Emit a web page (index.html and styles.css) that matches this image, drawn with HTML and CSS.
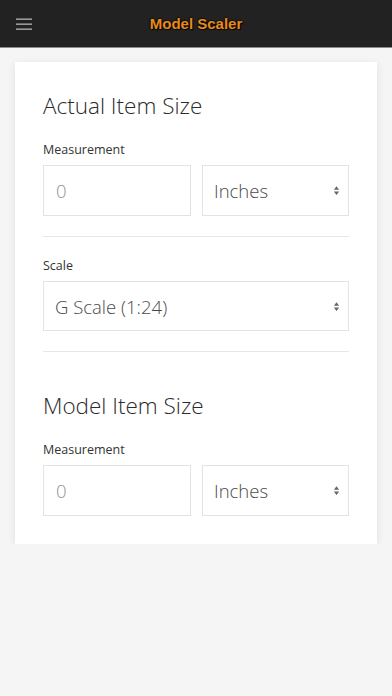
FILE: index.html
```html
<!DOCTYPE html>
<html>
<head>
<meta charset="utf-8">
<link rel="stylesheet" href="styles.css">
</head>
<body>
<header class="topbar">
  <svg class="menu" width="16" height="12" viewBox="0 0 16 12">
    <rect x="0" y="0.5" width="16" height="1.3" fill="#b5b5b5"/>
    <rect x="0" y="5.5" width="16" height="1.3" fill="#b5b5b5"/>
    <rect x="0" y="10.5" width="16" height="1.3" fill="#b5b5b5"/>
  </svg>
  <h1 class="title">Model Scaler</h1>
</header>
<main class="card">
  <h2 class="heading">Actual Item Size</h2>
  <label class="label">Measurement</label>
  <div class="row">
    <input class="field" type="text" placeholder="0">
    <select class="field select"><option>Inches</option></select>
  </div>
  <hr class="divider">
  <label class="label">Scale</label>
  <select class="field select full"><option>G Scale (1:24)</option></select>
  <hr class="divider">
  <h2 class="heading second">Model Item Size</h2>
  <label class="label">Measurement</label>
  <div class="row">
    <input class="field" type="text" placeholder="0">
    <select class="field select"><option>Inches</option></select>
  </div>
</main>
</body>
</html>
```
FILE: styles.css
```css
html, body {
  margin: 0;
  padding: 0;
}
body {
  background: #f5f5f5;
  font-family: "Open Sans", "Noto Sans", sans-serif;
  color: #333;
}
.topbar {
  height: 47px;
  background: #222222;
  border-bottom: 1px solid #8c8c8c;
  display: flex;
  align-items: center;
}
.menu {
  margin-left: 16px;
  display: block;
}
.title {
  flex: 1;
  margin: 0;
  padding-right: 32px;
  text-align: center;
  font-family: "Liberation Sans", Arial, sans-serif;
  font-weight: bold;
  font-size: 15px;
  color: #e8891c;
  text-shadow: 1px 1px 1px #000, -1px 0 1px #111, 0 -1px 1px #111;
}
.card {
  display: flex;
  flex-direction: column;
  margin: 14px 15px 0 15px;
  background: #fff;
  padding: 29px 28px 28px 28px;
  box-shadow: 0 2px 8px rgba(0,0,0,0.09);
}
.heading {
  margin: 0 0 20px 0;
  font-weight: 350;
  font-size: 22.5px;
  line-height: 30px;
  color: #2b2b2b;
}
.heading.second {
  margin-top: 19px;
}
.label {
  font-size: 12.5px;
  line-height: 18px;
  margin-bottom: 6px;
  color: #333;
}
.row {
  display: flex;
  gap: 11px;
}
.field {
  box-sizing: border-box;
  height: 51px;
  border: 1px solid #e3e3e3;
  background: #fff;
  font-family: "Open Sans", "Noto Sans", sans-serif;
  font-weight: 350;
  font-size: 18.5px;
  color: #4a4a4a;
  padding: 0 12px;
  margin: 0;
  border-radius: 0;
  outline: none;
  min-width: 0;
  width: 0;
  flex: 1 1 0;
}
.field::placeholder {
  color: #939393;
}
.select {
  -webkit-appearance: none;
  appearance: none;
  padding-left: 11px;
  background-image: url("data:image/svg+xml;utf8,<svg xmlns='http://www.w3.org/2000/svg' width='8' height='12' viewBox='0 0 8 12'><path d='M4 1 L7 5 L1 5 Z M4 11 L7 7 L1 7 Z' fill='%23666'/></svg>");
  background-repeat: no-repeat;
  background-position: right 8px center;
  background-size: 7px 11px;
}
.select.full {
  height: 50px;
  flex: none;
  width: 100%;
}
.divider {
  border: 0;
  border-top: 1px solid #e6e6e6;
  margin: 20px 0;
  height: 0;
}
```
